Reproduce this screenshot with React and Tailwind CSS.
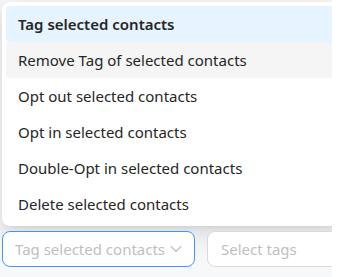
import React from 'react';

const actions = [
  'Tag selected contacts',
  'Remove Tag of selected contacts',
  'Opt out selected contacts',
  'Opt in selected contacts',
  'Double-Opt in selected contacts',
  'Delete selected contacts',
];

const Chevron = () => (
  <svg width="12" height="12" viewBox="0 0 12 12" fill="none" className="shrink-0">
    <path d="M1 3.5 L6 8.5 L11 3.5" stroke="#bfbfbf" strokeWidth="1.1" strokeLinecap="round" strokeLinejoin="round" />
  </svg>
);

const App = () => {
  return (
    <div className="w-[340px] h-[277px] bg-white overflow-hidden" style={{ fontFamily: '"Noto Sans", "Open Sans", sans-serif' }}>
      <div className="w-[332px] h-full bg-[#f7f8fa] overflow-hidden">
        <div className="w-[340px] ml-[2px] mt-[2px] bg-white rounded-lg p-1 shadow-[0_6px_16px_0_rgba(0,0,0,0.08),0_3px_6px_-4px_rgba(0,0,0,0.12),0_9px_28px_8px_rgba(0,0,0,0.05)]">
          {actions.map((a, i) => (
            <div
              key={a}
              className={
                i === 0
                  ? 'h-9 flex items-center px-3 rounded bg-[#e6f4ff] text-[15px] font-semibold text-[#262626]'
                  : i === 1
                  ? 'h-9 flex items-center px-3 rounded bg-[#f5f5f5] text-[15px] text-[#262626]'
                  : 'h-9 flex items-center px-3 rounded text-[15px] text-[#262626]'
              }
            >
              {a}
            </div>
          ))}
        </div>
        <div className="flex gap-3 mt-[5px] ml-[2px]">
          <div className="w-[193px] h-9 shrink-0 flex items-center justify-between pl-[12px] pr-[12px] bg-white border border-[#4096ff] rounded-lg">
            <span className="text-[15px] text-[#bfbfbf]">Tag selected contacts</span>
            <Chevron />
          </div>
          <div className="w-[200px] h-9 shrink-0 flex items-center pl-[13px] bg-white border border-[#d9d9d9] rounded-lg">
            <span className="text-[15px] text-[#bfbfbf]">Select tags</span>
          </div>
        </div>
      </div>
    </div>
  );
};

export default App;
